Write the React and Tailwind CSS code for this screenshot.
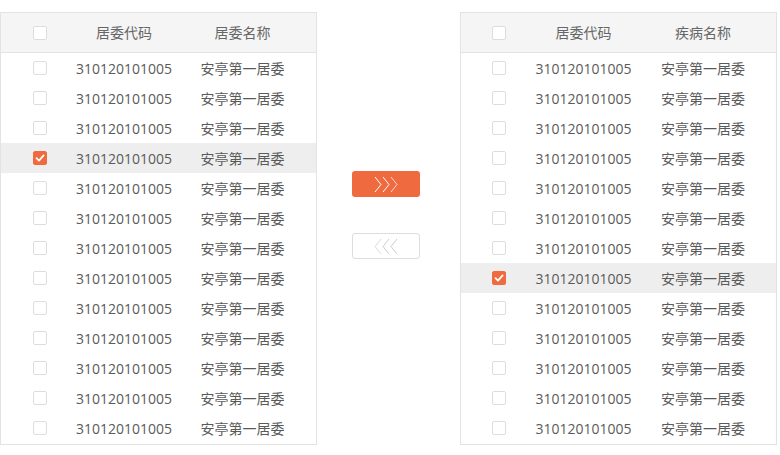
import React, { useState } from "react";

const code = "310120101005";
const name = "安亭第一居委";

function CheckBox({ checked, onClick }) {
  return (
    <button
      onClick={onClick}
      className={`w-[14px] h-[14px] rounded-[2px] flex items-center justify-center border ${
        checked ? "bg-[#ef6a3f] border-[#ef6a3f]" : "bg-white border-[#dddddd]"
      }`}
    >
      {checked && (
        <svg width="10" height="10" viewBox="0 0 10 10">
          <path d="M1.5 5.2 L4 7.6 L8.6 2.4" fill="none" stroke="#fff" strokeWidth="1.8" strokeLinecap="round" strokeLinejoin="round" />
        </svg>
      )}
    </button>
  );
}

function Chevrons({ dir, color }) {
  const d = dir === "right"
    ? ["M1 1 L7 8.5 L1 16", "M9 1 L15 8.5 L9 16", "M17 1 L23 8.5 L17 16"]
    : ["M7 1 L1 8.5 L7 16", "M15 1 L9 8.5 L15 16", "M23 1 L17 8.5 L23 16"];
  return (
    <svg width="24" height="17" viewBox="0 0 24 17">
      {d.map((p, i) => (
        <path key={i} d={p} fill="none" stroke={color} strokeWidth="1" opacity={dir === "right" ? (i === 2 ? 0.75 : 1) : (i === 0 ? 0.7 : 1)} />
      ))}
    </svg>
  );
}

function Panel({ title, selected, onToggle, cols }) {
  const rows = Array.from({ length: 13 }, (_, i) => i);
  return (
    <div className="w-[317px] border border-[#e3e3e3] bg-white pb-px">
      <div className={`h-[40px] grid ${cols} bg-[#f5f5f5] border-b border-[#e3e3e3] text-[14px] text-[#666]`}>
        <div className="flex items-center justify-center">
          <CheckBox checked={false} />
        </div>
        <div className="flex items-center justify-center whitespace-nowrap">居委代码</div>
        <div className="flex items-center justify-center whitespace-nowrap">{title}</div>
      </div>
      {rows.map((i) => (
        <div
          key={i}
          className={`h-[30px] grid ${cols} text-[14px] text-[#5a5a5a] ${
            selected === i ? "bg-[#eeeeee]" : ""
          }`}
        >
          <div className="flex items-center justify-center">
            <CheckBox checked={selected === i} onClick={() => onToggle(i)} />
          </div>
          <div className="flex items-center justify-center whitespace-nowrap">{code}</div>
          <div className="flex items-center justify-center whitespace-nowrap">{name}</div>
        </div>
      ))}
    </div>
  );
}

export default function App() {
  const [left, setLeft] = useState(3);
  const [right, setRight] = useState(7);

  return (
    <div
      className="w-[780px] h-[455px] bg-white pt-3 flex items-start"
      style={{ fontFamily: '"Open Sans", "Noto Sans CJK SC", sans-serif' }}
    >
      <Panel
        title="居委名称"
        cols="grid-cols-[78px_90px_1fr]"
        selected={left}
        onToggle={(i) => setLeft(left === i ? null : i)}
      />
      <div className="ml-[35px] mt-[159px] flex flex-col gap-[36px]">
        <button className="w-[68px] h-[26px] rounded-[3px] bg-[#ef6a3f] flex items-center justify-center">
          <Chevrons dir="right" color="#ffffff" />
        </button>
        <button className="w-[68px] h-[26px] rounded-[3px] bg-white border border-[#dddddd] flex items-center justify-center">
          <Chevrons dir="left" color="#cccccc" />
        </button>
      </div>
      <div className="ml-[40px]">
        <Panel
          title="疾病名称"
          cols="grid-cols-[76px_93px_1fr]"
          selected={right}
          onToggle={(i) => setRight(right === i ? null : i)}
        />
      </div>
    </div>
  );
}
